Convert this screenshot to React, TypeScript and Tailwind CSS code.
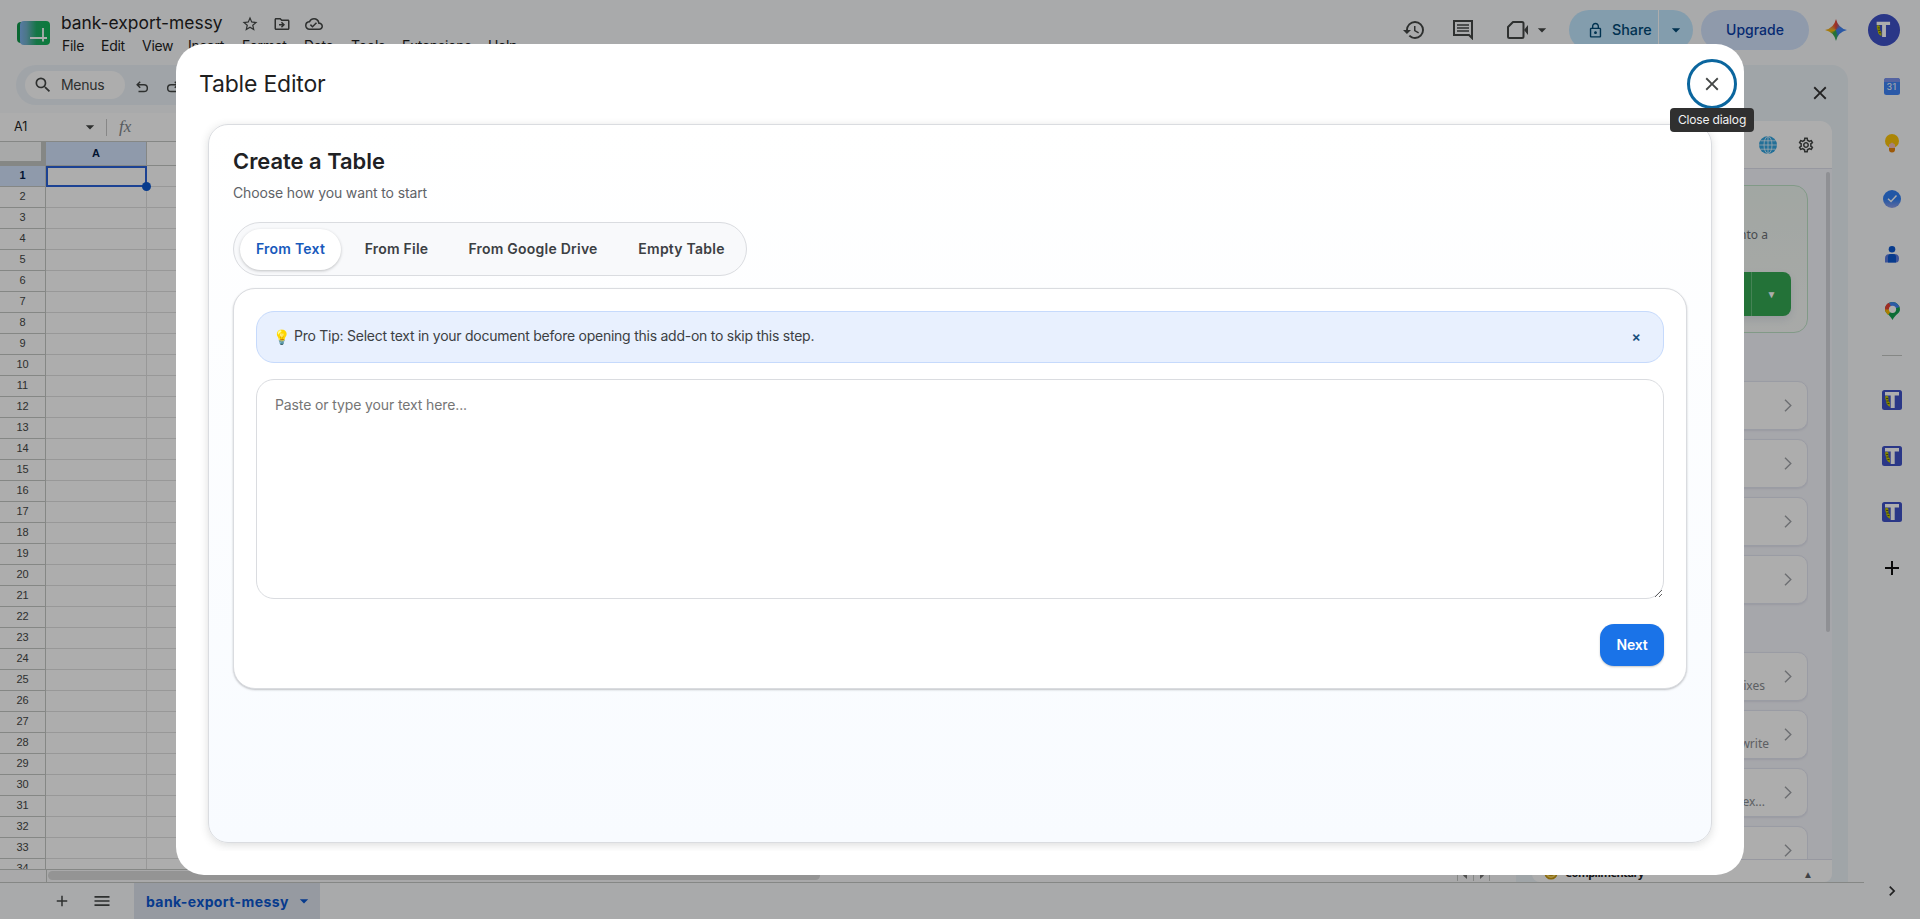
import { useState } from 'react';
import type { ReactNode } from 'react';
import clsx from 'clsx';
import {
  MdArrowDropDown,
  MdHistory,
  MdOutlineCloudDone,
  MdOutlineDriveFileMove,
  MdOutlineLock,
  MdOutlineSettings,
  MdSearch,
  MdStarBorder,
  MdMenu,
  MdAdd,
  MdClose,
  MdChevronRight,
} from 'react-icons/md';

const MENUS = [
  { label: 'File', width: 'w-[39px]' },
  { label: 'Edit', width: 'w-[41px]' },
  { label: 'View', width: 'w-[46px]' },
  { label: 'Insert', width: 'w-[54px]' },
  { label: 'Format', width: 'w-[62px]' },
  { label: 'Data', width: 'w-[47px]' },
  { label: 'Tools', width: 'w-[51px]' },
  { label: 'Extensions', width: 'w-[86px]' },
  { label: 'Help', width: 'w-[40px]' },
];

const TABS = [
  { label: 'From Text', width: 'w-[101px]' },
  { label: 'From File', width: 'w-[95px]' },
  { label: 'From Google Drive', width: 'w-[162px]' },
  { label: 'Empty Table', width: 'w-[119px]' },
];

const ROWS = Array.from({ length: 34 }, (_, i) => i + 1);

function SheetsLogo() {
  return (
    <svg width="34" height="26" viewBox="0 0 34 26">
      <defs>
        <linearGradient id="sheet" x1="0" x2="1">
          <stop offset="0" stopColor="#7fb4f0" />
          <stop offset="0.22" stopColor="#6fb0c8" />
          <stop offset="0.55" stopColor="#1fae68" />
          <stop offset="1" stopColor="#10b556" />
        </linearGradient>
      </defs>
      <rect x="0" y="1" width="30" height="21" rx="4" fill="#10994a" />
      <rect x="3" y="0" width="30" height="24" rx="4" fill="url(#sheet)" />
      <path d="M13 17h17M26 7v13.500" stroke="#fff" strokeWidth="1.800" fill="none" />
    </svg>
  );
}

function TableIcon({ round = false }: { round?: boolean }) {
  return (
    <svg width={round ? 32 : 20} height={round ? 32 : 20} viewBox="0 0 20 20">
      <rect width="20" height="20" rx={round ? 10 : 2.5} fill="#3f51c8" />
      <g transform={round ? 'translate(3.6 3.6) scale(.6)' : undefined}>
        <path d="M3 2h14v3.400h-4.300V18H8.700V5.400H3z" fill="#fff" />
        <path d="M3.200 6.200c2-1.200 3.600 0 3.200 2.200-.4 2 .4 3.400 1.600 4.400v4c-2.800-1-4-3.400-3.800-6-.6-.8-1.200-2.600-1-4.600z" fill="#c5c800" />
        <path d="M4.200 8.500h2M4.600 11h2M5.500 13.500h2" stroke="#4b4a10" strokeWidth=".9" />
      </g>
    </svg>
  );
}

function Sparkle() {
  return (
    <div className="h-[22px] w-[22px] bg-[conic-gradient(from_0deg,#ea4335,#4285f4_18%,#3b7df0_42%,#34a853_50%,#34a853_60%,#fbbc04_72%,#e9a13a_80%,#ea4335)] [clip-path:path('M11_0Q13_9_22_11Q13_13_11_22Q9_13_0_11Q9_9_11_0Z')]" />
  );
}

function UndoIcon({ className }: { className?: string }) {
  return (
    <svg width="12" height="12" viewBox="0 0 12 12" fill="none" stroke="currentColor" strokeWidth="1.500" className={className}>
      <path d="M4.200.8L1.200 3.800l3 3M1.500 3.800H8a3.300 3.300 0 0 1 0 6.700H2.500" />
    </svg>
  );
}

function Header() {
  return (
    <header className="flex h-[65px] flex-none">
      <div className="mt-[21px] ml-[17px] flex-none">
        <SheetsLogo />
      </div>
      <div className="ml-[10px] flex flex-1 flex-col">
        <div className="mt-[10px] flex h-[25px] items-center text-[#1f1f1f]">
          <span className="w-[180px] pt-[2px] text-[17.400px] whitespace-nowrap">bank-export-messy</span>
          <div className="flex items-center gap-[14px] pt-[2px] text-[#444746]">
            <MdStarBorder size={18} />
            <MdOutlineDriveFileMove size={18} />
            <MdOutlineCloudDone size={18} />
          </div>
        </div>
        <nav className="mt-[2px] ml-px flex h-[18px] items-center text-sm text-[#1f1f1f]">
          {MENUS.map(m => (
            <span key={m.label} className={clsx('flex-none tracking-[-0.02em]', m.width)}>{m.label}</span>
          ))}
        </nav>
      </div>
      <div className="mt-[10px] flex h-10 items-center text-[#444746]">
        <MdHistory size={24} className="mr-[27px]" />
        <svg width="20" height="20" viewBox="0 0 20 20" className="mr-[34px]" fill="none" stroke="currentColor" strokeWidth="2">
          <path d="M1 1h18v17l-3-3H1z" />
          <path d="M4 5h12M4 8h12M4 11h12" strokeWidth="1.500" />
        </svg>
        <svg width="22" height="18" viewBox="0 0 22 18" fill="none" stroke="currentColor" strokeWidth="2">
          <path d="M6 1h9q1.500 0 1.500 1.500v13q0 1.500-1.500 1.500H2.500Q1 17 1 15.500V6z" strokeLinejoin="round" />
          <path d="M17 9l4-5v10z" fill="currentColor" stroke="none" />
        </svg>
        <MdArrowDropDown size={20} className="ml-[3px]" />
        <div className="ml-[17px] flex h-10 w-[124px] overflow-hidden rounded-full bg-[#c2e7ff] text-[#004a77]">
          <div className="flex w-[90px] items-center border-r border-white pl-[18px] text-[14.300px] font-medium">
            <MdOutlineLock size={17} className="mr-[8px]" />
            Share
          </div>
          <div className="flex flex-1 items-center justify-center">
            <MdArrowDropDown size={20} />
          </div>
        </div>
        <div className="ml-[8px] flex h-10 w-[108px] items-center justify-center rounded-full bg-[#d3e3fd] text-sm font-medium text-[#0b3fa8]">Upgrade</div>
        <div className="ml-[16px]"><Sparkle /></div>
        <div className="mr-[20px] ml-[21px]"><TableIcon round /></div>
      </div>
    </header>
  );
}

function Grid() {
  return (
    <div className="flex flex-1 flex-col overflow-hidden bg-white">
      <div className="flex h-[28px] flex-none items-center text-[#444746]">
        <span className="w-[80px] pl-[14px] text-[12.500px] text-[#1f1f1f]">A1</span>
        <MdArrowDropDown size={20} />
        <div className="ml-[6px] h-[17px] w-px bg-[#c7c7c7]" />
        <span className="ml-[12px] font-['Liberation_Serif',serif] text-[17px] text-[#80868b] italic">fx</span>
      </div>
      <div className="flex h-[25px] flex-none border-y border-[#c4c7c5]">
        <div className="w-[46px] border-r-[5px] border-b-[4px] border-[#c4c7c5] bg-[#f8f9fa]" />
        <div className="flex w-[101px] items-center justify-center border-r border-[#c4c7c5] bg-[#d3e3fd] font-['Liberation_Sans',sans-serif] text-[11px] font-bold text-[#041e49]">A</div>
      </div>
      <div className="flex-1 overflow-hidden">
        {ROWS.map(n => (
          <div key={n} className="flex h-[21px]">
            <div
              className={clsx(
                "flex w-[46px] flex-none items-center justify-center border-r border-b border-[#c4c7c5] pb-[2px] font-['Liberation_Sans',sans-serif] text-[11px]",
                n === 1 ? 'bg-[#d3e3fd] font-bold text-[#041e49]' : 'text-[#444746]',
              )}
            >
              {n}
            </div>
            <div className={clsx('relative w-[101px] flex-none border-r border-b border-[#e1e1e1]', n === 1 && 'z-10 outline-2 -outline-offset-2 outline-[#2a62d9]')}>
              {n === 1 && <div className="absolute -right-[5px] -bottom-[5px] h-[9px] w-[9px] rounded-full bg-[#0b57d0]" />}
            </div>
            <div className="flex-1 border-b border-[#e1e1e1]" />
          </div>
        ))}
      </div>
      <div className="flex h-[13px] flex-none border-t border-[#c4c7c5] bg-[#f9fafb]">
        <div className="w-[47px] border-r border-[#c4c7c5]" />
        <div className="mt-px ml-[1px] h-[9px] w-[772px] rounded-full bg-[#dadada]" />
        <div className="ml-[637px] flex h-[11px] w-[33px] items-center border-x border-[#c4c7c5] text-[#777]">
          <svg width="31" height="11" viewBox="0 0 31 11" fill="currentColor">
            <path d="M9 2v7L5 5.500zM22 2v7l4-3.500z" />
            <path d="M15 0h1v11h-1z" fill="#c4c7c5" />
          </svg>
        </div>
      </div>
    </div>
  );
}

interface ToolCardProps {
  text?: string;
  wide?: boolean;
}

function ToolCard({ text = '', wide = false }: ToolCardProps) {
  return (
    <div className="flex h-[49px] flex-none items-center justify-end rounded-[10px] border border-[#e4e6f2] bg-white pr-[15px] shadow-[0_1px_2px_rgba(60,64,120,0.1)]">
      <span className={clsx('mt-[18px] text-[12px] text-[#8a8d92]', wide ? 'mr-[15px]' : 'mr-[19px]')}>{text}</span>
      <svg width="8" height="13" viewBox="0 0 8 13" fill="none" stroke="#a0a3a8" strokeWidth="1.400">
        <path d="M1 .7l5.800 5.800L1 12.300" />
      </svg>
    </div>
  );
}

function AddonPanel() {
  return (
    <aside className="mr-4 flex w-[332px] flex-none flex-col rounded-t-[16px] bg-[#ecf3f8] px-4 font-['Noto_Sans',sans-serif]">
      <div className="flex h-[56px] flex-none items-center justify-end pr-[1px] text-[#333]">
        <MdClose size={22} />
      </div>
      <div className="flex min-h-0 flex-1 flex-col overflow-hidden rounded-t-[12px] rounded-b-[8px] bg-[#f5f6fc]">
        <div className="flex h-[48px] flex-none items-center justify-end border-b border-[#dfe1ec] bg-white pr-[17px]">
          <svg width="18" height="18" viewBox="0 0 18 18" fill="none" stroke="#e8f6ff" strokeWidth=".8">
            <circle cx="9" cy="9" r="9" fill="#34a5e0" stroke="none" />
            <ellipse cx="9" cy="9" rx="4" ry="8.500" />
            <path d="M9 0v18M0 9h18M1.500 4.800h15M1.500 13.200h15" />
          </svg>
          <MdOutlineSettings size={18} className="ml-[20px] text-[#444746]" />
        </div>
        <div className="flex min-h-0 flex-1">
          <div className="flex flex-1 flex-col gap-[9px] overflow-hidden pt-[16px] pl-4">
            <div className="mb-[39px] flex h-[148px] flex-none flex-col items-end rounded-[14px] border border-[#bfe3c8] bg-linear-to-b from-[#eef6f0] to-[#f8faf8] pr-[16px]">
              <span className="mt-[40px] mr-[23px] text-[12px] text-[#6b6f75]">Turn your text into a</span>
              <div className="mt-[28px] flex h-[44px] w-[230px] rounded-[8px] bg-[#34a853] shadow-[0_4px_8px_rgba(60,80,140,0.12)]">
                <div className="flex-1 border-r border-[#66c27e]" />
                <div className="flex w-[39px] items-center justify-center text-[10px] text-white">▼</div>
              </div>
            </div>
            <ToolCard />
            <ToolCard />
            <ToolCard />
            <ToolCard />
            <div className="h-[30px] flex-none" />
            <ToolCard text="Suggests fixes" />
            <ToolCard text="Rewrite" wide />
            <ToolCard text="Formula ex..." />
            <ToolCard />
          </div>
          <div className="ml-[18px] w-[6px] flex-none pt-[3px]">
            <div className="h-[460px] w-[4px] rounded-full bg-[#d3d4da]" />
          </div>
        </div>
        <div className="flex h-[23px] flex-none items-center border-t border-[#dfe1ec] bg-white pr-[19px] pl-[12px]">
          <svg width="14" height="14" viewBox="0 0 14 14" fill="none" stroke="#c99a12" strokeWidth="1.500" className="mt-[3px]">
            <circle cx="7" cy="7" r="5.800" fill="#f7d560" />
            <path d="M4 8q3 3 6 0" />
          </svg>
          <span className="mt-[4px] ml-[7px] flex-1 text-[11px] font-bold tracking-[-0.5px] text-[#202124]">Complimentary</span>
          <span className="mt-[7px] text-[10px] text-[#5f6368]">▲</span>
        </div>
      </div>
    </aside>
  );
}

function SheetBar() {
  return (
    <footer className="flex h-[37px] flex-none items-center border-t border-[#c4c7c5] text-[#444746]">
      <MdAdd size={18} className="ml-[53px]" />
      <MdMenu size={20} className="ml-[21px]" />
      <div className="ml-[22px] flex h-full w-[186px] items-center bg-[#dde3ee] pl-[12px] text-[14px] font-bold text-[#0b57d0]">
        <span className="w-[148px] tracking-[0.4px] whitespace-nowrap">bank-export-messy</span>
        <MdArrowDropDown size={20} />
      </div>
    </footer>
  );
}

function RailItem({ children }: { children: ReactNode }) {
  return <div className="flex h-[56px] flex-none items-center justify-center">{children}</div>;
}

function SideRail() {
  return (
    <div className="flex w-[56px] flex-none flex-col">
      <div className="-mt-[6px]" />
      <RailItem>
        <svg width="16" height="17" viewBox="0 0 16 17" className="mb-px">
          <rect width="16" height="17" rx="2.500" fill="#3f83f8" />
          <path d="M2.500 0h11Q16 0 16 2.500V4H0V2.500Q0 0 2.500 0z" fill="#7d92ee" />
          <text x="8" y="12.300" textAnchor="middle" fontSize="9.500" fill="#fff" fontFamily="Roboto">31</text>
        </svg>
      </RailItem>
      <RailItem>
        <svg width="14" height="19" viewBox="0 0 14 19">
          <path d="M4 12h6v3.500q0 3-3 3t-3-3z" fill="#e8830c" />
          <circle cx="7" cy="7" r="7" fill="#fcc50a" />
          <path d="M4 14V10.500l3-2 3 2V14z" fill="#f3bfb8" />
        </svg>
      </RailItem>
      <RailItem>
        <svg width="18" height="18" viewBox="0 0 18 18">
          <defs>
            <linearGradient id="tasks" x2="0" y2="1">
              <stop offset=".5" stopColor="#3180f5" />
              <stop offset="1" stopColor="#8fa0ea" />
            </linearGradient>
          </defs>
          <circle cx="9" cy="9" r="9" fill="url(#tasks)" />
          <path d="M5 8.700l3 2.800 5.500-6" fill="none" stroke="#fff" strokeWidth="1.400" />
        </svg>
      </RailItem>
      <RailItem>
        <svg width="14" height="17" viewBox="0 0 14 17" className="mb-px">
          <circle cx="7" cy="3.300" r="3.300" fill="#0b57d0" />
          <path d="M0 16.500v-4Q0 8 4.500 8h5Q14 8 14 12.500 14 16.500 11 16.500z" fill="#5a7be0" />
          <path d="M3 16.500v-5.500q0-3 3-3h2q3 0 3 3v5.500z" fill="#0b57d0" />
        </svg>
      </RailItem>
      <RailItem>
        <svg width="15" height="18" viewBox="0 0 15 18">
          <path d="M7.500 0A7.500 7.500 0 0 1 15 7.500C15 11.500 10.500 12 7.500 18 4.500 12 0 11.500 0 7.500A7.500 7.500 0 0 1 7.500 0z" fill="#12a150" />
          <path d="M7.500 7.500L2 2.400A7.500 7.500 0 0 1 14.500 5z" fill="#4285f4" />
          <path d="M7.500 7.500L.2 9A7.500 7.500 0 0 1 4 .8z" fill="#ea4335" />
          <path d="M7.500 7.500L3 13Q0 10.500 0 7.500z" fill="#fbbc04" />
          <circle cx="7.500" cy="7.300" r="3.600" fill="#fff" />
        </svg>
      </RailItem>
      <div className="mx-auto mt-[16px] mb-[16px] h-px w-[20px] flex-none bg-[#c4c7c5]" />
      <RailItem><TableIcon /></RailItem>
      <RailItem><TableIcon /></RailItem>
      <RailItem><TableIcon /></RailItem>
      <RailItem>
        <svg width="14" height="14" viewBox="0 0 14 14" stroke="#111" strokeWidth="2"><path d="M7 0v14M0 7h14" /></svg>
      </RailItem>
      <div className="flex-1" />
      <RailItem><MdChevronRight size={20} className="text-[#333]" /></RailItem>
    </div>
  );
}

function Spreadsheet() {
  return (
    <div className="isolate flex h-full flex-col bg-[#f9fbfd]">
      <Header />
      <div className="flex min-h-0 flex-1">
        <div className="flex min-w-0 flex-1 flex-col">
          <div className="flex min-h-0 flex-1">
            <div className="mr-4 flex min-w-0 flex-1 flex-col">
              <div className="mb-2 ml-4 flex h-10 flex-none items-center rounded-full bg-[#ecf2f8] pl-[9px] text-[#444746]">
                <div className="flex h-7 w-[100px] items-center rounded-full bg-white pl-[8px] text-sm tracking-[-0.3px]">
                  <MdSearch size={20} className="mr-[8px]" />
                  Menus
                </div>
                <UndoIcon className="mt-[4px] ml-[11px]" />
                <UndoIcon className="mt-[4px] ml-[19px] -scale-x-100" />
              </div>
              <Grid />
            </div>
            <AddonPanel />
          </div>
          <SheetBar />
        </div>
        <SideRail />
      </div>
    </div>
  );
}

function CreateTable() {
  const [tab, setTab] = useState('From Text');
  const [text, setText] = useState('');

  return (
    <div className="flex h-[719px] flex-col rounded-[20px] border border-[#dadce0] bg-linear-to-b from-white to-[#f8fbff] px-[24px] pt-[23px] shadow-[0_2px_8px_rgba(60,64,67,0.18)]">
      <h1 className="text-[21.900px] leading-[26px] font-semibold text-[#202124]">Create a Table</h1>
      <p className="mt-[9px] text-[14px] leading-[20px] tracking-[-0.13px] text-[#5f6368]">Choose how you want to start</p>
      <div className="mt-[19px] flex h-[54px] w-[514px] items-center rounded-full border border-[#dadce0] bg-[#f8f9fb] px-[6px]">
        {TABS.map(t => (
          <button
            key={t.label}
            onClick={() => setTab(t.label)}
            className={clsx(
              'mr-[8px] h-[41px] flex-none rounded-full pb-[2px] text-[14px] font-semibold tracking-[0.23px] whitespace-nowrap',
              t.width,
              t.label === tab ? 'bg-white text-[#185abc] shadow-[0_1px_3px_rgba(60,64,67,0.3)]' : 'text-[#3c4043]',
            )}
          >
            {t.label}
          </button>
        ))}
      </div>
      <section className="mt-[12px] flex h-[401px] flex-col rounded-[22px] border border-[#dadce0] bg-white px-[22px] pt-[22px] shadow-[0_1px_2px_rgba(60,64,67,0.3)]">
        <div className="flex h-[52px] flex-none items-center rounded-[18px] border border-[#c6dafc] bg-[#e8f0fe] pr-[22px] pl-[16px] text-[14px] text-[#3c4043]">
          <span className="mr-[3px] w-[18px] pb-[2px] text-[14px]">💡</span>
          <span className="flex-1 pb-[3px] tracking-[-0.25px]">Pro Tip: Select text in your document before opening this add-on to skip this step.</span>
          <button className="pb-[2px] text-[14px] font-semibold text-[#174e7c]">×</button>
        </div>
        <textarea
          value={text}
          onChange={e => setText(e.target.value)}
          placeholder="Paste or type your text here..."
          className="mt-[16px] h-[220px] w-full flex-none resize rounded-[18px] border border-[#dadce0] px-[18px] pt-[15px] text-[14px] leading-[20px] tracking-[-0.12px] placeholder:text-[#757575]"
        />
        <button className="mt-[25px] h-[42px] w-[64px] self-end rounded-[14px] bg-[#1a73e8] pb-[2px] text-[14px] font-semibold tracking-[-0.2px] text-white shadow-[0_1px_2px_rgba(60,64,67,0.3)]">Next</button>
      </section>
    </div>
  );
}

function TableEditorDialog() {
  return (
    <div className="fixed inset-0 z-20 flex items-center justify-center bg-black/32">
      <div className="h-[831px] w-[1568px] rounded-[28px] bg-white">
        <div className="flex h-[72px] items-center justify-between pt-[8px] pr-[7px] pl-[23px]">
          <h2 className="text-[23px] tracking-[-0.2px] text-[#1f1f1f]">Table Editor</h2>
          <div className="relative">
            <button aria-label="Close dialog" className="flex h-[50px] w-[50px] items-center justify-center rounded-full border-[3px] border-[#0b669e] text-[#444746]">
              <MdClose size={22} />
            </button>
            <div className="absolute top-[49px] left-1/2 flex h-6 w-[84px] -translate-x-1/2 items-center justify-center rounded-[4px] bg-[#303030] text-[12px] tracking-[-0.15px] whitespace-nowrap text-[#f2f2f2]">Close dialog</div>
          </div>
        </div>
        <div className="mx-[24px] h-[735px] overflow-hidden p-[8px]">
          <CreateTable />
        </div>
      </div>
    </div>
  );
}

export default function App() {
  return (
    <div className="h-screen w-screen overflow-hidden font-['Inter','Noto_Color_Emoji',sans-serif]">
      <Spreadsheet />
      <TableEditorDialog />
    </div>
  );
}
